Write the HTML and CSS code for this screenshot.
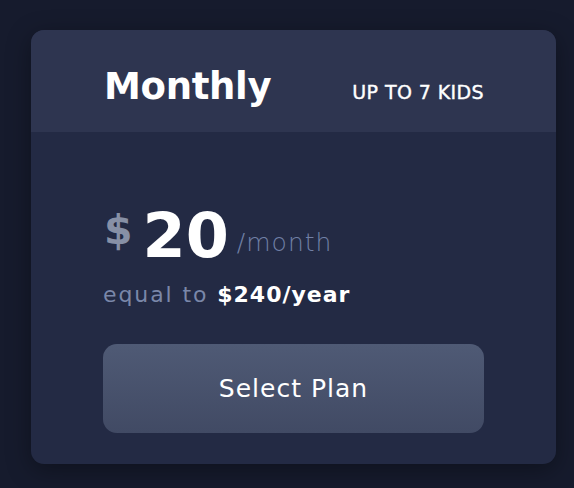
FILE: index.html
```html
<!DOCTYPE html>
<html lang="en">
<head>
  <meta charset="UTF-8" />
  <meta name="viewport" content="width=device-width, initial-scale=1.0"/>
  <title>Pricing</title>
  <link rel="stylesheet" href="styles.css">
</head>
<body>
  <div class="plan-card">
    <div class="plan-header">
      <h2>Monthly</h2>
      <span class="plan-limit">UP TO 7 KIDS</span>
    </div>

    <div class="plan-body">
      <div class="price">
        <span class="currency">$</span>
        <span class="amount">20</span>
        <span class="period">/month</span>
      </div>
      <p class="equal">equal to <strong>$240/year</strong></p>
      <button class="btn">Select Plan</button>
    </div>
  </div>
</body>
</html>
```

FILE: styles.css
```css
body {
  font-family: "DejaVu Sans", sans-serif;
  background: #161b2d;
  color: white;
  margin: 0;
  padding: 30px 18px 0 31px;
  height: 488px;
  box-sizing: border-box;
  overflow: hidden;
}

.plan-card {
  width: 525px;
  background: #232a44;
  border-radius: 13px;
  overflow: hidden;
  box-shadow: 0 6px 24px rgba(0,0,0,0.35);
}

.plan-header {
  height: 102px;
  box-sizing: border-box;
  background: #2e3550;
  display: flex;
  align-items: baseline;
  justify-content: space-between;
  padding: 38px 72px 0 73px;
}

.plan-header h2 {
  margin: 0;
  font-size: 37px;
  line-height: 1;
  font-weight: 700;
  letter-spacing: -0.3px;
}

.plan-limit {
  font-size: 19px;
  letter-spacing: 0.4px;
  -webkit-text-stroke: 0.4px white;
}

.plan-body {
  padding: 73px 72px 31px 72px;
}

.price {
  display: flex;
  align-items: flex-start;
  line-height: 1;
}

.currency {
  font-size: 41px;
  font-weight: 700;
  color: #8790a6;
  margin: 5px 10px 0 1px;
}

.amount {
  font-size: 62px;
  font-weight: 700;
  margin-right: 8px;
}

.period {
  font-size: 25px;
  font-weight: 300;
  letter-spacing: 1px;
  color: #7180a6;
  margin-top: 25px;
}

.equal {
  margin: 15px 0 0 0;
  font-size: 22px;
  letter-spacing: 1.9px;
  color: #7a87a9;
}

.equal strong {
  color: white;
  font-weight: 700;
  letter-spacing: 1px;
}

.btn {
  display: block;
  width: 381px;
  height: 89px;
  margin-top: 37px;
  border: none;
  border-radius: 14px;
  background: linear-gradient(180deg, #4f5a75 0%, #414a64 100%);
  color: white;
  font-family: inherit;
  font-size: 25px;
  letter-spacing: 1px;
  cursor: pointer;
}
```
